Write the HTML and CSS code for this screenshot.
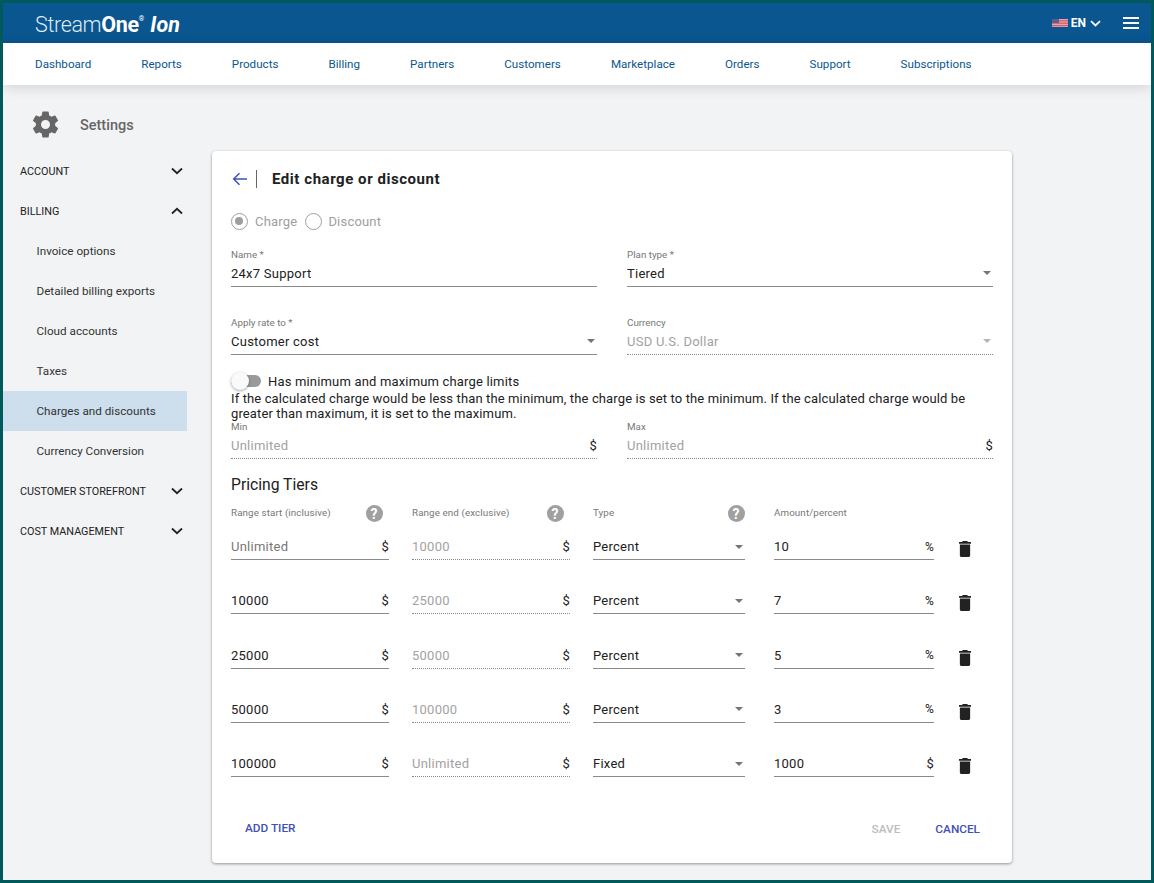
FILE: index.html
```html
<!DOCTYPE html>
<html lang="en">
<head>
<meta charset="utf-8">
<title>Edit charge or discount</title>
<link rel="stylesheet" href="styles.css">
</head>
<body>
<div class="frame">
  <header class="topbar">
    <div class="logo"><span class="logo-light">Stream</span><span class="logo-bold">One</span><sup class="logo-reg">®</sup><span class="logo-ion">Ion</span></div>
    <div class="top-right">
      <svg class="flag" width="16" height="8" viewBox="0 0 16 8"><rect width="16" height="8" fill="#e8a4ac"/><rect y="1.2" width="16" height="1.2" fill="#cf5d6b"/><rect y="3.6" width="16" height="1.2" fill="#cf5d6b"/><rect y="6" width="16" height="1.2" fill="#cf5d6b"/><rect width="7" height="4" fill="#5a5f8c"/></svg>
      <span class="lang">EN</span>
      <svg class="lang-chev" width="11" height="7" viewBox="0 0 11 7"><path d="M1 1.2 5.500 5.400 10 1.200" fill="none" stroke="#fff" stroke-width="1.8"/></svg>
      <svg class="burger" width="16" height="12" viewBox="0 0 16 12"><path d="M0 1h16M0 6h16M0 11h16" stroke="#fff" stroke-width="2"/></svg>
    </div>
  </header>
  <nav class="mainnav">
    <a>Dashboard</a><a>Reports</a><a>Products</a><a>Billing</a><a>Partners</a><a>Customers</a><a>Marketplace</a><a>Orders</a><a>Support</a><a>Subscriptions</a>
  </nav>
  <main class="page">
    <aside class="side">
      <div class="side-title">
        <svg width="31" height="31" viewBox="0 0 24 24"><path fill="#666" d="M19.43 12.98c.04-.32.07-.64.07-.98s-.03-.66-.07-.98l2.11-1.65c.19-.15.24-.42.12-.64l-2-3.46c-.12-.22-.39-.3-.61-.22l-2.49 1c-.52-.4-1.08-.73-1.69-.98l-.38-2.65A.49.49 0 0 0 14 2h-4c-.25 0-.46.18-.49.42l-.38 2.65c-.61.25-1.17.59-1.69.98l-2.49-1c-.23-.09-.49 0-.61.22l-2 3.46c-.13.22-.07.49.12.64l2.11 1.65c-.04.32-.07.65-.07.98s.03.66.07.98l-2.11 1.65c-.19.15-.24.42-.12.64l2 3.46c.12.22.39.3.61.22l2.49-1c.52.4 1.08.73 1.69.98l.38 2.65c.03.24.24.42.49.42h4c.25 0 .46-.18.49-.42l.38-2.65c.61-.25 1.17-.59 1.69-.98l2.49 1c.23.09.49 0 .61-.22l2-3.46c.12-.22.07-.49-.12-.64l-2.11-1.65zM12 15.500c-1.93 0-3.5-1.57-3.5-3.5s1.57-3.500 3.500-3.500 3.500 1.570 3.500 3.500-1.570 3.500-3.500 3.500z"/></svg>
        <span>Settings</span>
      </div>
      <div class="side-head"><span>ACCOUNT</span><svg width="12" height="8" viewBox="0 0 12 8"><path d="M1 1.5 6 6.2 11 1.5" fill="none" stroke="#222" stroke-width="1.8"/></svg></div>
      <div class="side-head"><span>BILLING</span><svg width="12" height="8" viewBox="0 0 12 8"><path d="M1 6.500 6 1.800 11 6.500" fill="none" stroke="#222" stroke-width="1.8"/></svg></div>
      <div class="side-item">Invoice options</div>
      <div class="side-item">Detailed billing exports</div>
      <div class="side-item">Cloud accounts</div>
      <div class="side-item">Taxes</div>
      <div class="side-item side-active">Charges and discounts</div>
      <div class="side-item">Currency Conversion</div>
      <div class="side-head"><span>CUSTOMER STOREFRONT</span><svg width="12" height="8" viewBox="0 0 12 8"><path d="M1 1.5 6 6.2 11 1.5" fill="none" stroke="#222" stroke-width="1.8"/></svg></div>
      <div class="side-head"><span>COST MANAGEMENT</span><svg width="12" height="8" viewBox="0 0 12 8"><path d="M1 1.5 6 6.2 11 1.5" fill="none" stroke="#222" stroke-width="1.8"/></svg></div>
    </aside>
    <section class="card">
      <div class="card-head">
        <svg class="back" width="16" height="14" viewBox="0 0 16 14"><path d="M15 7H2M7.500 1.200 1.700 7l5.800 5.800" fill="none" stroke="#3f51b5" stroke-width="1.5"/></svg>
        <span class="head-rule"></span>
        <h1>Edit charge or discount</h1>
      </div>
      <div class="radios">
        <span class="radio radio-on"></span><span class="radio-label">Charge</span>
        <span class="radio radio-off"></span><span class="radio-label">Discount</span>
      </div>
      <div class="two-col row-one">
        <div class="field"><label>Name *</label><div class="control"><span>24x7 Support</span></div></div>
        <div class="field"><label>Plan type *</label><div class="control"><span>Tiered</span><i class="caret"></i></div></div>
      </div>
      <div class="two-col row-two">
        <div class="field"><label>Apply rate to *</label><div class="control"><span>Customer cost</span><i class="caret"></i></div></div>
        <div class="field"><label>Currency</label><div class="control control-off"><span>USD U.S. Dollar</span><i class="caret caret-off"></i></div></div>
      </div>
      <div class="toggle-row"><span class="toggle"><span class="knob"></span></span><span>Has minimum and maximum charge limits</span></div>
      <p class="hint">If the calculated charge would be less than the minimum, the charge is set to the minimum. If the calculated charge would be greater than maximum, it is set to the maximum.</p>
      <div class="two-col">
        <div class="field field-tight"><label>Min</label><div class="control control-off"><span>Unlimited</span><b class="unit">$</b></div></div>
        <div class="field field-tight"><label>Max</label><div class="control control-off"><span>Unlimited</span><b class="unit">$</b></div></div>
      </div>
      <h2>Pricing Tiers</h2>
      <div class="tiers tier-head">
        <div class="th"><span>Range start (inclusive)</span><i class="help">?</i></div>
        <div class="th"><span>Range end (exclusive)</span><i class="help">?</i></div>
        <div class="th th-type"><span>Type</span><i class="help">?</i></div>
        <div class="th th-amount"><span>Amount/percent</span></div>
      </div>

      <div class="tiers tier-row">
        <div class="control cell-grey"><span>Unlimited</span><b class="unit">$</b></div>
        <div class="control control-off"><span>10000</span><b class="unit">$</b></div>
        <div class="control"><span>Percent</span><i class="caret"></i></div>
        <div class="control amount"><span>10</span><b class="unit unit-small">%</b></div>
        <svg class="trash" width="12" height="16" viewBox="0 0 14 18" preserveAspectRatio="none"><path fill="#222" d="M1 16c0 1.100.9 2 2 2h8c1.100 0 2-.9 2-2V4H1zM14 1h-3.500l-1-1h-5l-1 1H0v2h14z"/></svg>
      </div>
      <div class="tiers tier-row">
        <div class="control"><span>10000</span><b class="unit">$</b></div>
        <div class="control control-off"><span>25000</span><b class="unit">$</b></div>
        <div class="control"><span>Percent</span><i class="caret"></i></div>
        <div class="control amount"><span>7</span><b class="unit unit-small">%</b></div>
        <svg class="trash" width="12" height="16" viewBox="0 0 14 18" preserveAspectRatio="none"><path fill="#222" d="M1 16c0 1.100.9 2 2 2h8c1.100 0 2-.9 2-2V4H1zM14 1h-3.500l-1-1h-5l-1 1H0v2h14z"/></svg>
      </div>
      <div class="tiers tier-row">
        <div class="control"><span>25000</span><b class="unit">$</b></div>
        <div class="control control-off"><span>50000</span><b class="unit">$</b></div>
        <div class="control"><span>Percent</span><i class="caret"></i></div>
        <div class="control amount"><span>5</span><b class="unit unit-small">%</b></div>
        <svg class="trash" width="12" height="16" viewBox="0 0 14 18" preserveAspectRatio="none"><path fill="#222" d="M1 16c0 1.100.9 2 2 2h8c1.100 0 2-.9 2-2V4H1zM14 1h-3.500l-1-1h-5l-1 1H0v2h14z"/></svg>
      </div>
      <div class="tiers tier-row">
        <div class="control"><span>50000</span><b class="unit">$</b></div>
        <div class="control control-off"><span>100000</span><b class="unit">$</b></div>
        <div class="control"><span>Percent</span><i class="caret"></i></div>
        <div class="control amount"><span>3</span><b class="unit unit-small">%</b></div>
        <svg class="trash" width="12" height="16" viewBox="0 0 14 18" preserveAspectRatio="none"><path fill="#222" d="M1 16c0 1.100.9 2 2 2h8c1.100 0 2-.9 2-2V4H1zM14 1h-3.500l-1-1h-5l-1 1H0v2h14z"/></svg>
      </div>
      <div class="tiers tier-row">
        <div class="control"><span>100000</span><b class="unit">$</b></div>
        <div class="control control-off"><span>Unlimited</span><b class="unit">$</b></div>
        <div class="control"><span>Fixed</span><i class="caret"></i></div>
        <div class="control amount"><span>1000</span><b class="unit">$</b></div>
        <svg class="trash" width="12" height="16" viewBox="0 0 14 18" preserveAspectRatio="none"><path fill="#222" d="M1 16c0 1.100.9 2 2 2h8c1.100 0 2-.9 2-2V4H1zM14 1h-3.500l-1-1h-5l-1 1H0v2h14z"/></svg>
      </div>
      <div class="actions">
        <a class="btn add">ADD TIER</a>
        <a class="btn save">SAVE</a>
        <a class="btn cancel">CANCEL</a>
      </div>
    </section>
  </main>
</div>
</body>
</html>
```
FILE: styles.css
```css
* { box-sizing: border-box; }
html, body { margin: 0; padding: 0; }
body { font-family: Roboto, "Liberation Sans", sans-serif; color: #212121; }
.frame { width: 1154px; height: 883px; border: 3px solid #005a5c; background: #f2f3f5; overflow: hidden; display: flex; flex-direction: column; }

.topbar { height: 40px; flex: none; background: #0a5690; color: #fff; display: flex; align-items: center; justify-content: space-between; padding: 0 12px 0 32px; }
.logo { display: flex; align-items: center; font-size: 21.5px; letter-spacing: -0.35px; line-height: 1; padding-top: 4px; }
.logo-light { font-weight: 300; color: #dfe9f2; }
.logo-bold { font-weight: 700; }
.logo-reg { font-size: 7px; margin: -12px 6px 0 0; letter-spacing: 0; }
.logo-ion { font-weight: 700; font-style: italic; letter-spacing: 0; }
.top-right { display: flex; align-items: center; }
.flag { margin-right: 3px; }
.lang { font-size: 12px; font-weight: 700; margin-right: 4px; }
.burger { margin-left: 22px; }

.mainnav { height: 42px; flex: none; background: #fff; display: flex; align-items: center; gap: 50px; padding: 0 32px; position: relative; box-shadow: 0 2px 14px rgba(0,0,0,.14); }
.mainnav a { font-size: 11.6px; letter-spacing: .02px; color: #0a5690; }

.page { flex: 1; display: flex; min-height: 0; }
.side { width: 184px; flex: none; }
.side-title { height: 66px; padding: 12px 0 0 27px; display: flex; align-items: center; gap: 19px; font-size: 14.5px; font-weight: 500; color: #666; }
.side-title span { padding-top: 2px; }
.side-head { height: 40px; display: flex; align-items: center; justify-content: space-between; padding: 0 4px 0 17px; font-size: 10.8px; color: #212121; }
.side-item { height: 40px; display: flex; align-items: center; padding-left: 33.5px; font-size: 11.7px; color: #333; }
.side-active { background: #cddeed; }

.card { width: 800px; height: 712px; margin: 66px 0 0 25px; background: #fff; border-radius: 4px; box-shadow: 0 1px 3px rgba(0,0,0,.4); padding: 0 19px; }
.card-head { height: 56px; display: flex; align-items: center; }
.back { margin-right: 8px; margin-left: 1px; }
.head-rule { width: 1px; height: 18px; background: #666; margin-right: 15px; }
h1 { margin: 0; font-size: 15px; font-weight: 700; color: #212121; letter-spacing: .55px; }

.radios { height: 28px; display: flex; align-items: center; font-size: 13px; color: #9e9e9e; letter-spacing: .2px; }
.radio { width: 17px; height: 17px; border: 1.5px solid #9e9e9e; border-radius: 50%; position: relative; margin-right: 7px; }
.radio-off { margin-right: 6px; }
.radio-on::after { content: ""; position: absolute; left: 3px; top: 3px; width: 8px; height: 8px; border-radius: 50%; background: #9e9e9e; }
.radio-label { margin-right: 8px; }

.two-col { display: grid; grid-template-columns: 366px 366px; column-gap: 30px; }
.row-one { margin-top: 12px; }
.row-two { margin-top: 28px; }
.field label { display: block; height: 15px; line-height: 15px; font-size: 9.8px; color: #777; margin-bottom: 2px; }
.field-tight label { height: 12px; line-height: 12px; margin-bottom: 3px; }
.control { height: 23px; display: flex; align-items: center; justify-content: space-between; border-bottom: 1px solid #8a8a8a; font-size: 13px; letter-spacing: .25px; color: #212121; padding-bottom: 4px; }
.control-off { border-bottom: 1px dotted #8a8a8a; color: #a2a2a2; }
.cell-grey { color: #777; }
.caret { width: 0; height: 0; border-left: 4.5px solid transparent; border-right: 4.5px solid transparent; border-top: 4.5px solid #757575; margin-right: 2px; }
.caret-off { border-top-color: #b5b5b5; }
.unit { font-weight: 400; color: #212121; font-size: 13px; }
.unit-small { font-size: 12px; }

.toggle-row { display: flex; align-items: center; height: 20px; margin-top: 16px; font-size: 13px; letter-spacing: .17px; }
.toggle { width: 30px; height: 12px; border-radius: 6px; background: #9a9a9a; position: relative; margin-right: 7px; flex: none; }
.knob { position: absolute; left: 0; top: -3px; width: 18px; height: 18px; border-radius: 50%; background: #fafafa; box-shadow: 0 1px 3px rgba(0,0,0,.35); }
.hint { margin: 0; font-size: 13px; line-height: 15px; letter-spacing: .125px; color: #212121; }

h2 { margin: 14px 0 0; height: 24px; line-height: 24px; font-size: 15.7px; font-weight: 400; color: #212121; }
.tiers { display: grid; grid-template-columns: 158px 158px 152px 166px 12px; column-gap: 23px; }
.tier-head { height: 30px; align-items: center; }
.th { display: flex; align-items: center; justify-content: space-between; font-size: 9.8px; color: #777; letter-spacing: .1px; padding-right: 6.5px; }
.th-type { padding-right: .5px; }
.th-amount { margin-left: 6px; }
.help { width: 17px; height: 17px; border-radius: 50%; background: #a0a0a0; color: #fff; font-style: normal; font-weight: 700; font-size: 14px; display: flex; align-items: center; justify-content: center; margin-top: 3px; }
.tier-row { height: 54.25px; padding-top: 10px; align-items: start; }
.tier-row .control { padding-bottom: 3px; }
.tier-row .amount { margin-left: 6px; }
.trash { margin: 4px 0 0 2px; }

.actions { display: flex; align-items: center; height: 30px; margin-top: 16px; font-size: 11.8px; font-weight: 500; }
.btn { display: block; }
.add { color: #3f51b5; margin-left: 14px; margin-right: auto; padding-bottom: 2px; }
.save { color: #bdbdbd; margin-right: 35px; }
.cancel { color: #3f51b5; margin-right: 13px; }
```
